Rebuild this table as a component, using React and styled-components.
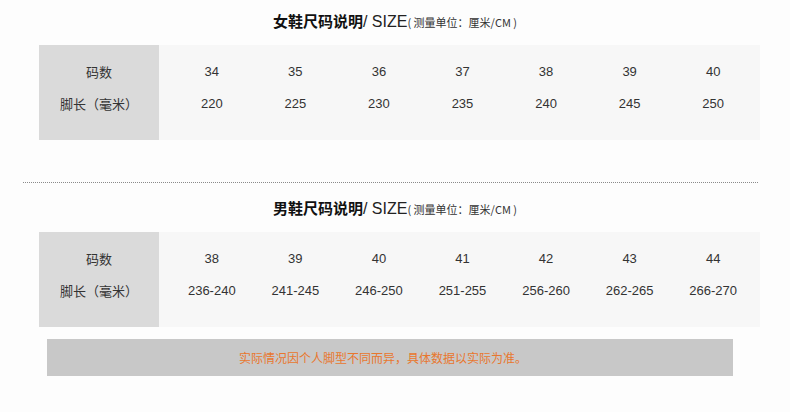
import styled, { createGlobalStyle } from 'styled-components'

const GlobalStyle = createGlobalStyle`
    body {
        margin: 0;
        background: #fdfdfd;
        font-family: "Liberation Sans", "Noto Sans CJK SC", sans-serif;
        color: #333;
    }
`;

const Page = styled.div`
    width: 790px;
    height: 412px;
    overflow: hidden;
`;

const Title = styled.h2`
    margin: ${(props) => props.top}px 0 15px;
    height: 22px;
    line-height: 22px;
    text-align: center;
    font-weight: normal;
    color: #111;
    white-space: nowrap;

    b {
        font-family: "Noto Sans CJK SC", sans-serif;
        font-size: 15px;
        font-weight: bold;
    }

    .en {
        font-size: 16px;
        color: #222;
    }

    small {
        font-family: "Noto Sans CJK SC", sans-serif;
        font-size: 11px;
        color: #333;
    }
`;

const Table = styled.div`
    display: flex;
    margin-left: 39px;
    width: 721px;
    height: 95px;
    background: #f7f7f7;
`;

const LabelCol = styled.div`
    width: 120px;
    background: #dadada;
    padding-top: 16px;
    display: grid;
    grid-template-rows: 22px 22px;
    row-gap: 10px;
    align-content: start;
    font-family: "Noto Sans CJK SC", sans-serif;
    font-size: 13px;
    line-height: 22px;
    text-align: center;
    color: #333;
`;

const DataGrid = styled.div`
    flex: 1;
    padding: 16px 5px 0 11px;
    display: grid;
    grid-template-columns: repeat(7, 1fr);
    grid-template-rows: 22px 22px;
    grid-auto-flow: column;
    row-gap: 10px;
    align-content: start;
    font-size: 13px;
    line-height: 22px;
    text-align: center;
    color: #333;
`;

const Divider = styled.div`
    margin: 42px 32px 0 23px;
    border-top: 1px dotted #8a8a8a;
`;

const Note = styled.div`
    margin: 12px 0 0 47px;
    width: 672px;
    padding-right: 14px;
    height: 37px;
    line-height: 37px;
    background: #c8c8c8;
    text-align: center;
    font-family: "Noto Sans CJK SC", sans-serif;
    font-size: 12px;
    color: #e8772e;
`;

const women = [
    ['34', '220'], ['35', '225'], ['36', '230'], ['37', '235'],
    ['38', '240'], ['39', '245'], ['40', '250'],
]

const men = [
    ['38', '236-240'], ['39', '241-245'], ['40', '246-250'], ['41', '251-255'],
    ['42', '256-260'], ['43', '262-265'], ['44', '266-270'],
]

const SizeTable = ({ rows }) => (
    <Table>
        <LabelCol>
            <div>码数</div>
            <div>脚长（毫米）</div>
        </LabelCol>
        <DataGrid>
            {rows.map(([size, len]) => [
                <div key={size + 'a'}>{size}</div>,
                <div key={size + 'b'}>{len}</div>,
            ])}
        </DataGrid>
    </Table>
)

const SizeTitle = ({ kind, top }) => (
    <Title top={top}>
        <b>{kind}鞋尺码说明</b><span className="en">/ SIZE</span><small>( 测量单位：厘米/CM )</small>
    </Title>
)

export default function App() {
    return (
        <Page>
            <GlobalStyle />
            <SizeTitle kind="女" top={8} />
            <SizeTable rows={women} />
            <Divider />
            <SizeTitle kind="男" top={12} />
            <SizeTable rows={men} />
            <Note>实际情况因个人脚型不同而异，具体数据以实际为准。</Note>
        </Page>
    )
}
